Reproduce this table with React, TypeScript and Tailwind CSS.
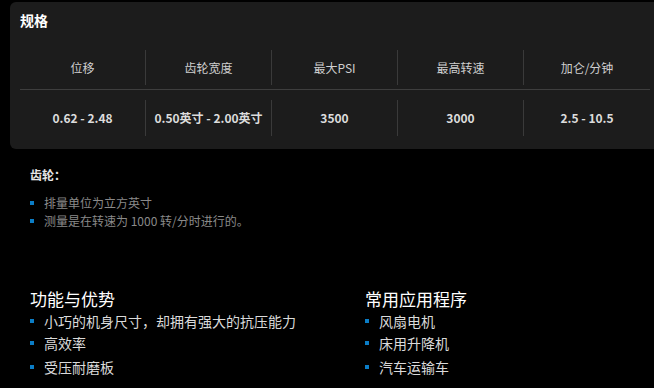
import React from "react";

const cols = [
  { head: "位移", val: "0.62 - 2.48" },
  { head: "齿轮宽度", val: "0.50英寸 - 2.00英寸" },
  { head: "最大PSI", val: "3500" },
  { head: "最高转速", val: "3000" },
  { head: "加仑/分钟", val: "2.5 - 10.5" },
];

const Bullet: React.FC<{ children: React.ReactNode; className?: string }> = ({
  children,
  className,
}) => (
  <li className={"flex items-center " + (className ?? "")}>
    <span className="w-[4px] h-[4px] bg-[#0b7dc6] mr-[10px] shrink-0" />
    <span>{children}</span>
  </li>
);

export default function App() {
  return (
    <div
      className="w-[654px] h-[388px] bg-black overflow-hidden pt-[2px]"
      style={{ fontFamily: '"Noto Sans CJK SC", "Noto Sans", sans-serif' }}
    >
      <div className="ml-[10px] w-[660px] rounded-md bg-[#1c1c1c] pt-[8px] pl-[10px] pb-[13px]">
        <div className="text-[14px] leading-[20px] font-bold text-white">规格</div>
        <div className="w-[630px] mt-[20px]">
          <div className="grid grid-cols-5 border-b border-[#3e3e3e] pb-[4px]">
            {cols.map((c, i) => (
              <div
                key={c.head}
                className={
                  "h-[35px] flex items-center justify-center text-[12px] text-[#cfcfcf] " +
                  (i < 4 ? "border-r border-[#3a3a3a]" : "")
                }
              >
                {c.head}
              </div>
            ))}
          </div>
          <div className="grid grid-cols-5 pt-[10px]">
            {cols.map((c, i) => (
              <div
                key={c.head}
                className={
                  "h-[36px] flex items-center justify-center text-[12px] font-bold text-[#dcdcdc] " +
                  (i < 4 ? "border-r border-[#3a3a3a]" : "")
                }
              >
                {c.val}
              </div>
            ))}
          </div>
        </div>
      </div>

      <div className="pl-[30px] mt-[17px]">
        <div className="text-[12px] leading-[18px] font-bold text-[#e6e6e6]">齿轮：</div>
        <ul className="mt-[10px] text-[12px] leading-[18px] text-[#8a8a8a]">
          <Bullet>排量单位为立方英寸</Bullet>
          <Bullet>测量是在转速为 1000 转/分时进行的。</Bullet>
        </ul>
      </div>

      <div className="pl-[30px] mt-[58px] grid grid-cols-[335px_1fr]">
        <div>
          <div className="text-[17px] leading-[22px] text-white">功能与优势</div>
          <ul className="text-[14px] text-[#dadada]">
            <Bullet className="h-[22px]">小巧的机身尺寸，却拥有强大的抗压能力</Bullet>
            <Bullet className="h-[22px]">高效率</Bullet>
            <Bullet className="h-[24px] mt-[1px]">受压耐磨板</Bullet>
          </ul>
        </div>
        <div>
          <div className="text-[17px] leading-[22px] text-white">常用应用程序</div>
          <ul className="text-[14px] text-[#dadada]">
            <Bullet className="h-[22px]">风扇电机</Bullet>
            <Bullet className="h-[22px]">床用升降机</Bullet>
            <Bullet className="h-[24px] mt-[1px]">汽车运输车</Bullet>
          </ul>
        </div>
      </div>
    </div>
  );
}
